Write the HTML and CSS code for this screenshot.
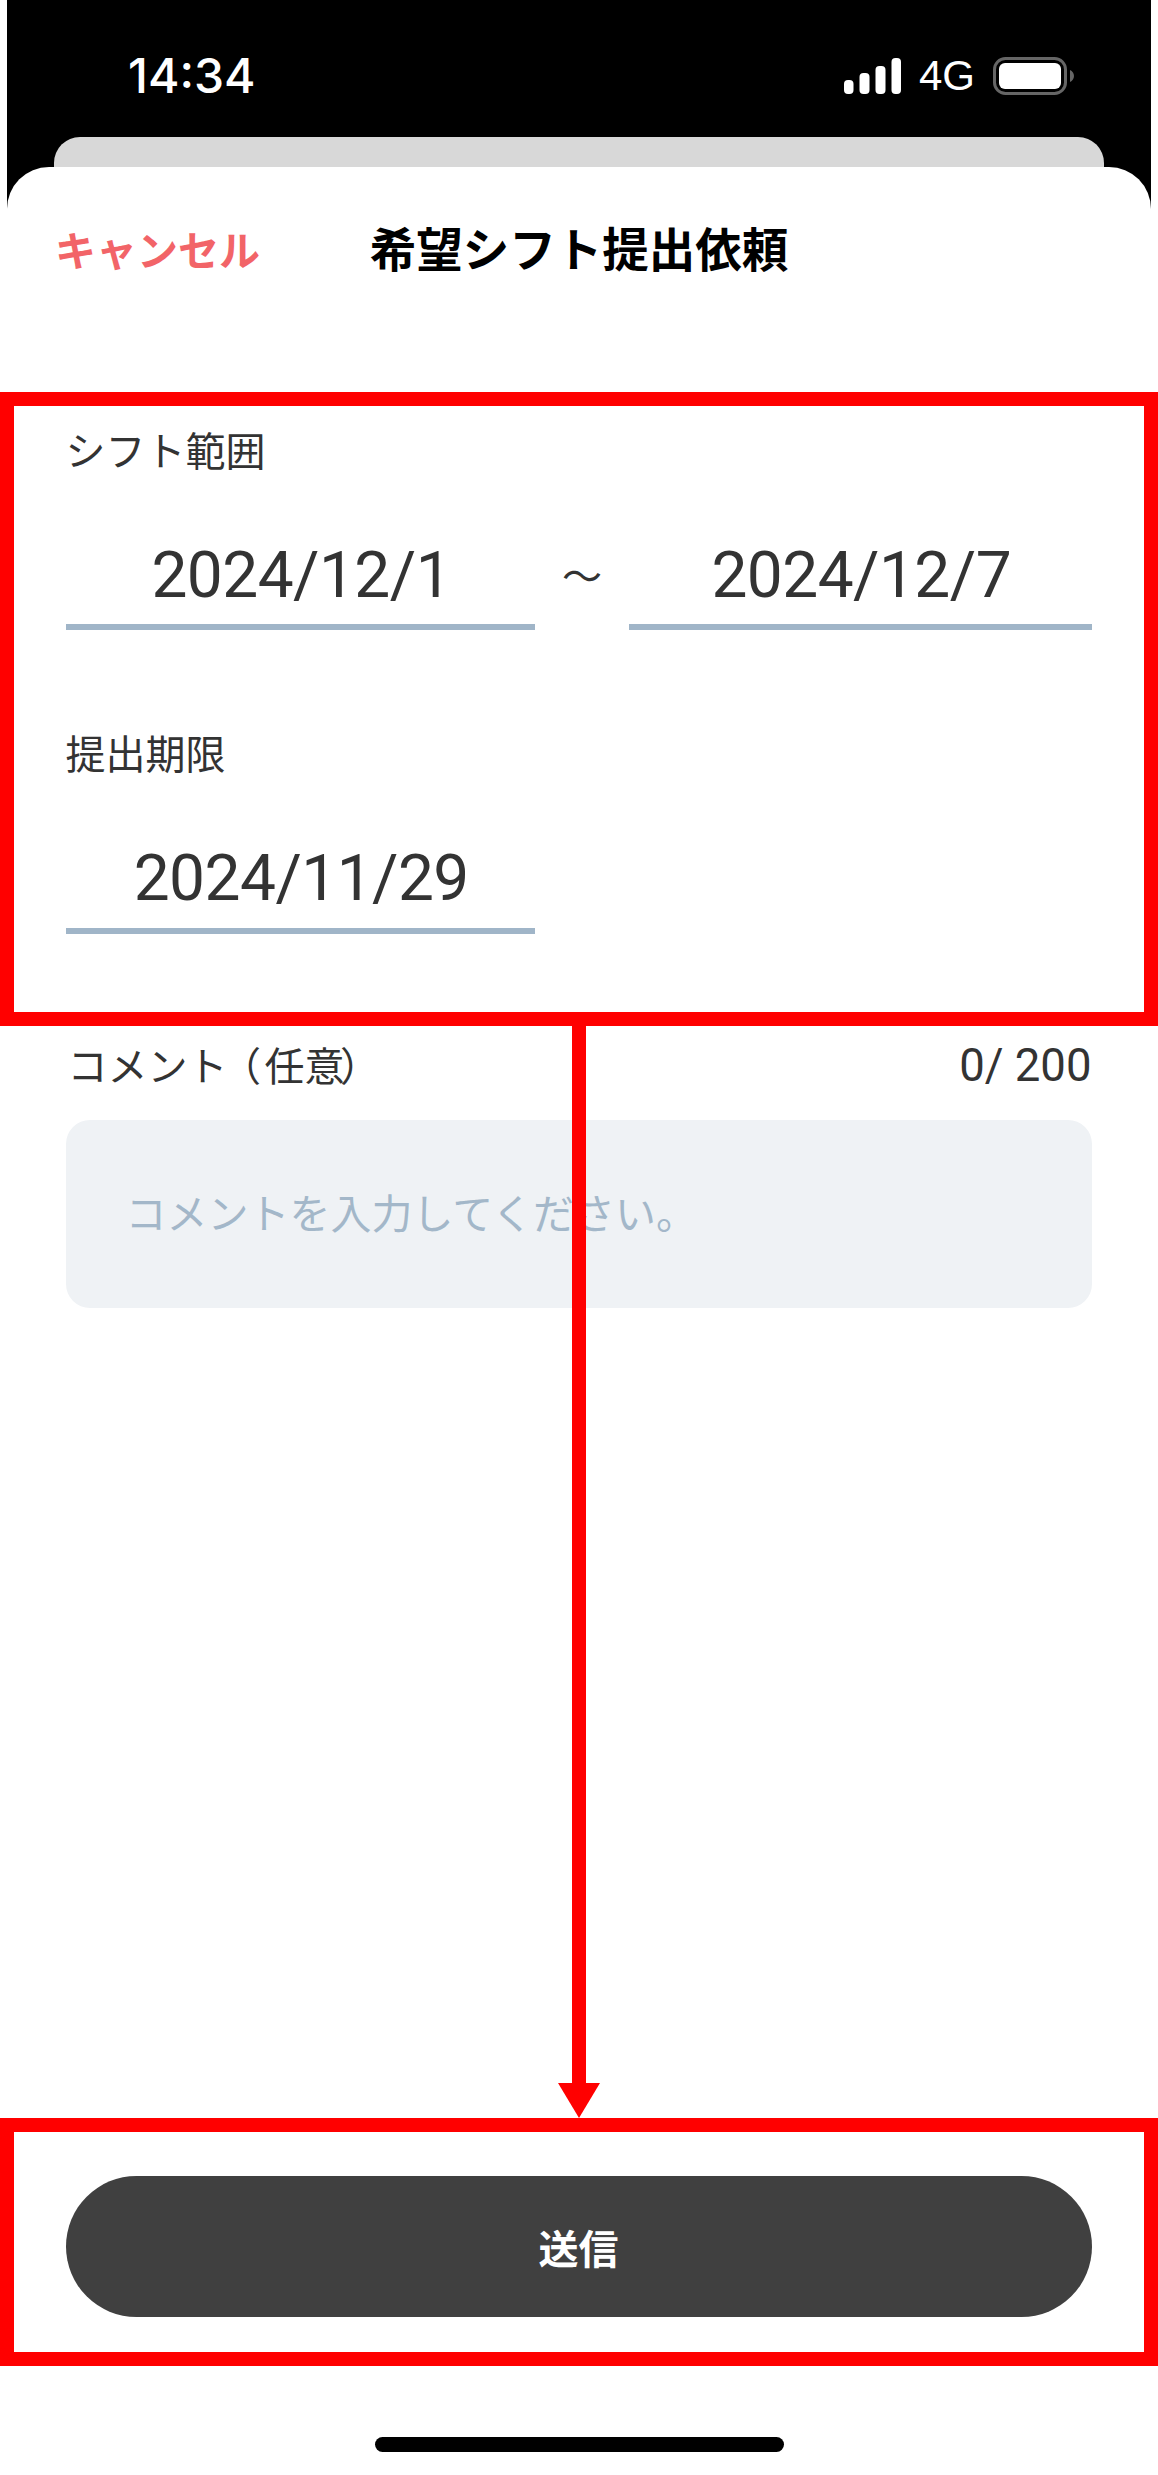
FILE: index.html
```html
<!DOCTYPE html>
<html lang="ja">
<head>
<meta charset="utf-8">
<title>希望シフト提出依頼</title>
<link rel="stylesheet" href="styles.css">
</head>
<body>
<div class="page">
  <div class="phone">
    <div class="status">
      <span class="time">14:34</span>
      <div class="status-right">
        <svg class="signal" width="57" height="36" viewBox="0 0 57 36">
          <rect x="0" y="22" width="9.5" height="14" rx="4" fill="#fff"/>
          <rect x="15.5" y="15" width="10" height="21" rx="4" fill="#fff"/>
          <rect x="31.5" y="8" width="10" height="28" rx="4" fill="#fff"/>
          <rect x="47.5" y="0" width="9.5" height="36" rx="4" fill="#fff"/>
        </svg>
        <span class="net">4G</span>
        <svg class="battery" width="81" height="38" viewBox="0 0 81 38">
          <rect x="1.5" y="1.5" width="71" height="35" rx="11" fill="none" stroke="#666" stroke-width="3"/>
          <rect x="6" y="6" width="62" height="26" rx="6" fill="#fff"/>
          <path d="M77 13v12c2.500-1 4-3.500 4-6s-1.500-5-4-6z" fill="#666"/>
        </svg>
      </div>
    </div>
    <div class="back-card"></div>
    <div class="sheet">
      <header class="sheet-head">
        <span class="cancel">キャンセル</span>
        <h1 class="title">希望シフト提出依頼</h1>
        <span></span>
      </header>
      <main class="form">
        <div class="label label-range">シフト範囲</div>
        <div class="range">
          <div class="date">2024/12/1</div>
          <div class="tilde">〜</div>
          <div class="date">2024/12/7</div>
        </div>
        <div class="label label-due">提出期限</div>
        <div class="range due">
          <div class="date">2024/11/29</div>
        </div>
        <div class="comment-head">
          <span class="label">コメント<span class="paren paren-open">（</span>任意<span class="paren paren-close">）</span></span>
          <span class="count">0/ 200</span>
        </div>
        <div class="comment-box">コメントを入力してください。</div>
      </main>
      <button class="submit" type="button">送信</button>
      <div class="home"></div>
    </div>
  </div>
  <div class="mark mark-top"></div>
  <div class="mark mark-bottom"></div>
  <svg class="arrow" width="42" height="1092" viewBox="0 0 42 1092">
    <rect x="14" y="0" width="14" height="1058" fill="#ff0000"/>
    <polygon points="0,1057 42,1057 21,1092" fill="#ff0000"/>
  </svg>
</div>
</body>
</html>
```
FILE: styles.css
```css
* { box-sizing: border-box; }
html, body { margin: 0; padding: 0; background: #fff; }
body { font-family: "Noto Sans CJK JP", sans-serif; color: #333; }
.page { position: relative; width: 1158px; height: 2475px; overflow: hidden; padding: 0 7px; }
.phone { height: 100%; background: #000; display: flex; flex-direction: column; }
.status { height: 137px; padding: 15px 77px 0 121px; display: flex; align-items: center; justify-content: space-between; color: #fff; flex: none; }
.time { font-family: Inter, sans-serif; font-weight: 500; font-size: 48px; line-height: 50px; }
.status-right { display: flex; align-items: center; }
.signal { display: block; }
.net { font-family: "Liberation Sans", sans-serif; font-size: 42px; line-height: 40px; margin-left: 18px; width: 74px; }
.battery { display: block; }
.back-card { height: 30px; margin: 0 47px; background: #d8d8d8; border-radius: 26px 26px 0 0; flex: none; }
.sheet { flex: 1; background: #fff; border-radius: 42px 42px 0 0; display: flex; flex-direction: column; padding: 0 59.500px 23px 58.500px; }
.sheet-head { height: 162px; margin: 0 -59.500px 0 -58.500px; padding: 0 48px; display: grid; grid-template-columns: 1fr auto 1fr; align-items: center; flex: none; }
.cancel { font-size: 41px; font-weight: 700; color: #f26468; line-height: 48px; }
.title { margin: -2px 0 0; font-size: 46.500px; font-weight: 700; color: #000; line-height: 50px; }
.form { margin-top: 100px; }
.label { font-size: 40px; line-height: 40px; color: #333; font-weight: 400; }
.label-due { margin-top: 102px; }
.range { display: grid; grid-template-columns: 469.500px 94px 1fr; margin-top: 71px; }
.date { font-family: Roboto, sans-serif; font-size: 64px; letter-spacing: -0.550px; line-height: 72px; text-align: center; color: #333; padding: 0 0 12px 2px; border-bottom: 6px solid #a0b5c8; }
.tilde { font-size: 40px; line-height: 68px; text-align: center; color: #333; }
.due .date { padding-bottom: 13px; }
.comment-head { display: flex; justify-content: space-between; align-items: center; margin-top: 108px; padding-left: 2px; }
.paren { font-feature-settings: "palt"; }
.paren-open { margin: 0 5px 0 12px; }
.paren-close { margin-left: -3px; }
.count { font-family: Roboto, sans-serif; font-size: 45.500px; line-height: 40px; color: #333; padding-top: 4px; }
.comment-box { margin-top: 33.500px; height: 188px; background: #eff2f5; border-radius: 24px; padding: 0 0 6px 60px; display: flex; align-items: center; font-size: 41px; color: #a3b7c9; }
.submit { margin-top: auto; height: 141px; border: 0; border-radius: 71px; background: #404040; color: #fff; font: 700 40px/48px "Noto Sans CJK JP", sans-serif; flex: none; padding: 0; }
.home { margin: 120px 0 0 309px; width: 409px; height: 15px; border-radius: 8px; background: #000; flex: none; }
.mark { position: absolute; left: 0; width: 1158px; border: 14px solid #ff0000; }
.mark-top { top: 392px; height: 634px; }
.mark-bottom { top: 2118px; height: 248px; }
.arrow { position: absolute; left: 558px; top: 1026px; display: block; }
```
